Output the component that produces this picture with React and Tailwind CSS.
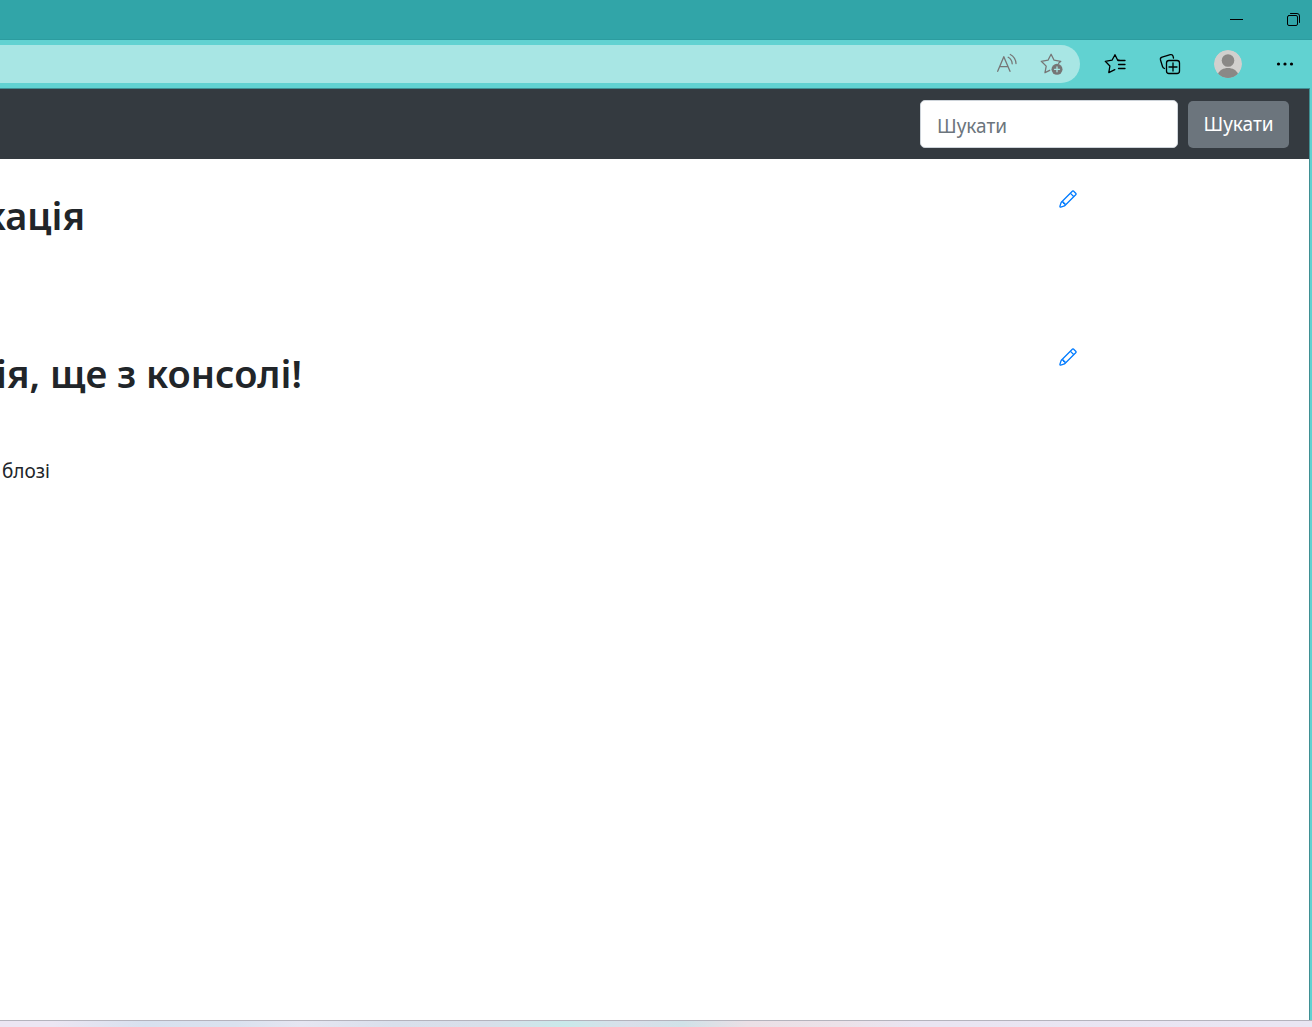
import React from "react";

const iconProps = {
  fill: "none",
  stroke: "currentColor",
  strokeLinecap: "round",
  strokeLinejoin: "round",
  "aria-hidden": true,
};

function MinimizeIcon() {
  return (
    <svg className="h-5 w-5" viewBox="0 0 20 20" aria-hidden="true">
      <path d="M4 9.500h13" stroke="currentColor" strokeWidth="1" />
    </svg>
  );
}

function RestoreIcon() {
  return (
    <svg className="h-5 w-5" viewBox="0 0 20 20" {...iconProps}>
      <rect x="4.500" y="5.500" width="10" height="10" rx="1.500" />
      <path d="M7.500 3.500h6.500a2.500 2.500 0 0 1 2.500 2.500v6.500" />
    </svg>
  );
}

function ReadAloudIcon() {
  return (
    <svg className="h-6 w-6" viewBox="0 0 24 24" strokeWidth="1.3" {...iconProps}>
      <path d="M2.700 19.300 8.800 4.700 15 19.300M5 14.700h8" />
      <path d="M13.200 5.300a8 8 0 0 1 4 6.500M15.300 2.500a11 11 0 0 1 5.700 9" />
    </svg>
  );
}

function AddFavoriteIcon() {
  return (
    <svg className="h-6 w-6" viewBox="0 0 24 24" strokeWidth="1.3" {...iconProps}>
      <path d="M9.700 18.300 5 20.700l1.200-6.600L1.300 9.300 8 8.200 11.100 2.300l3 5.900 6.700 1.100-2.200 2" />
      <circle cx="17" cy="17.300" r="5.500" fill="currentColor" stroke="none" />
      <path d="M17 14.800v5M14.500 17.300h5" stroke="#a8e6e4" />
    </svg>
  );
}

function FavoritesIcon() {
  return (
    <svg className="h-6 w-6" viewBox="0 0 24 24" strokeWidth="1.3" {...iconProps}>
      <path d="M15 8.200h-1.300L11 2.700 8 8.200 1.300 9.300l4.600 4.700-1.100 6.700 6-3.100" />
      <path d="M14 8.500h7M14.500 12.500h6.500M14.500 16.500h6.500" />
    </svg>
  );
}

function CollectionsIcon() {
  return (
    <svg className="h-6 w-6" viewBox="0 0 24 24" strokeWidth="1.3" {...iconProps}>
      <rect x="7.500" y="8.500" width="13" height="13" rx="2.500" />
      <path d="M14 11v8M10 15h8" />
      <path d="M5.500 16.500a3 3 0 0 1-2-2L1.500 8a2.300 2.300 0 0 1 1.600-2.800l8.200-2.500a2.300 2.300 0 0 1 2.800 1.600l.4 1.700" />
    </svg>
  );
}

function ProfileIcon() {
  return (
    <svg className="h-7 w-7 rounded-full" viewBox="0 0 28 28" aria-hidden="true">
      <circle cx="14" cy="14" r="14" fill="#d2d0ce" />
      <circle cx="14" cy="10.500" r="6.300" fill="#8a8886" />
      <path d="M4 24c1.500-4 5.500-6 10-6s8.500 2 10 6a14 14 0 0 1-20 0z" fill="#8a8886" />
    </svg>
  );
}

function MoreIcon() {
  return (
    <svg className="h-6 w-6" viewBox="0 0 24 24" fill="currentColor" aria-hidden="true">
      <circle cx="5.500" cy="12" r="1.600" />
      <circle cx="12" cy="12" r="1.600" />
      <circle cx="18.500" cy="12" r="1.600" />
    </svg>
  );
}

function PencilIcon() {
  return (
    <svg className="h-5 w-5" viewBox="0 0 16 16" fill="currentColor" aria-hidden="true">
      <path
        fillRule="evenodd"
        d="M11.293 1.293a1 1 0 0 1 1.414 0l2 2a1 1 0 0 1 0 1.414l-9 9a1 1 0 0 1-.39.242l-3 1a1 1 0 0 1-1.266-1.265l1-3a1 1 0 0 1 .242-.391l9-9zM12 2l2 2-9 9-3 1 1-3 9-9z"
      />
      <path
        fillRule="evenodd"
        d="M12.146 6.354l-2.500-2.500.708-.708 2.500 2.500-.707.708zM3 10v.5a.5.5 0 0 0 .5.5H4v.5a.5.5 0 0 0 .5.5H5v.5a.5.5 0 0 0 .5.5H6v-1.500a.5.5 0 0 0-.5-.5H5v-.5a.5.5 0 0 0-.5-.5H3z"
      />
    </svg>
  );
}

function Post({ title, titleWidth, children }) {
  return (
    <article className="flex h-[158px] items-start">
      <div className="min-w-0 flex-1">
        <h2
          className={`${titleWidth} flex h-[52px] items-center justify-end overflow-hidden text-[38px] font-semibold whitespace-nowrap`}
        >
          {title}
        </h2>
        {children}
      </div>
      <a href="#edit" aria-label="Редагувати" className="mr-[231px] text-[#007bff]">
        <PencilIcon />
      </a>
    </article>
  );
}

export default function App() {
  return (
    <div className="flex min-h-screen flex-col overflow-hidden bg-[#61d2d1] font-['Noto_Sans','Open_Sans',sans-serif] text-[#212529]">
      <header>
        <div className="flex h-10 items-center justify-end gap-[37px] border-b border-[#2c9c9f] bg-[#31a5a8] pr-[9px] text-black">
          <button type="button" aria-label="Згорнути">
            <MinimizeIcon />
          </button>
          <button type="button" aria-label="Відновити">
            <RestoreIcon />
          </button>
        </div>
        <div className="flex h-12 items-center text-black">
          <div className="flex h-[38px] flex-1 items-center justify-end gap-[21px] rounded-r-full bg-[#a8e6e4] pr-4 text-[#767676]">
            <button type="button" aria-label="Прочитати вголос">
              <ReadAloudIcon />
            </button>
            <button type="button" aria-label="Додати до вибраного">
              <AddFavoriteIcon />
            </button>
          </div>
          <div className="flex items-center gap-[31px] pr-[15px] pl-6">
            <button type="button" aria-label="Вибране">
              <FavoritesIcon />
            </button>
            <button type="button" aria-label="Колекції">
              <CollectionsIcon />
            </button>
            <button type="button" aria-label="Профіль">
              <ProfileIcon />
            </button>
            <button type="button" aria-label="Інше">
              <MoreIcon />
            </button>
          </div>
        </div>
      </header>

      <div className="mr-0.5 flex flex-1 flex-col border-t border-r border-[#3f8f93] bg-white">
        <nav className="flex h-[70px] items-center justify-end bg-[#343a40] pr-5">
          <form className="flex items-center gap-2.5" onSubmit={(e) => e.preventDefault()}>
            <input
              type="search"
              aria-label="Шукати"
              placeholder="Шукати"
              className="h-12 w-[258px] rounded-[5px] border border-[#ced4da] bg-white px-4 pt-1 text-[19px] placeholder:text-[#6c757d]"
            />
            <button
              type="submit"
              className="h-[47px] w-[101px] rounded-[5px] bg-[#6c757d] text-[19px] text-white"
            >
              Шукати
            </button>
          </form>
        </nav>
        <main className="flex-1 pt-[30px]">
          <Post title="кація" titleWidth="w-[85px]" />
          <Post title="ія, ще з консолі!" titleWidth="w-[302px]">
            <p className="mt-[58px] flex h-7 w-[50px] items-center justify-end overflow-hidden text-[19px] whitespace-nowrap">
              блозі
            </p>
          </Post>
        </main>
      </div>

      <footer className="h-[7px] border-t border-[#b4b3bd] bg-[linear-gradient(90deg,#ece6f3_0%,#ece6f3_4%,#d8e1ef_11%,#dae2ef_18%,#e6e6f2_23%,#d9e0ec_30%,#d8dfea_37%,#c9e9ea_43%,#d9dfea_48%,#d0e2e8_52%,#ebe0e6_57%,#ece2e9_64%,#e9e5f2_70%,#e9e6f3_100%)]" />
    </div>
  );
}
